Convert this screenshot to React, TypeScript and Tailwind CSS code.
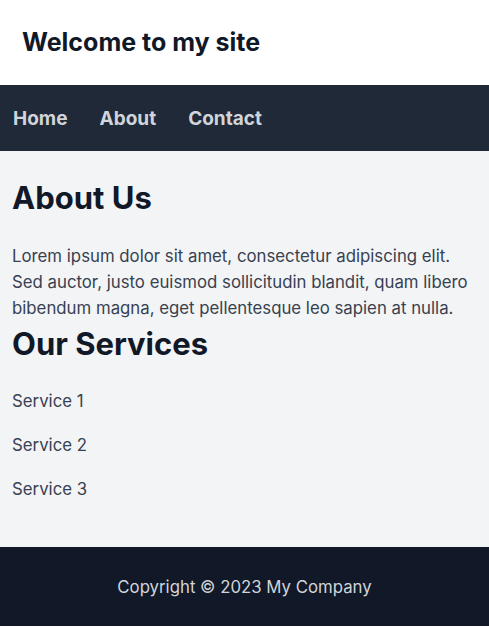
const App = () => {
  const links = ['Home', 'About', 'Contact'];
  const services = ['Service 1', 'Service 2', 'Service 3'];

  return (
    <div className="font-['Inter',sans-serif]">
      <header className="h-[85px] flex items-center px-[22px] bg-white">
        <h1 className="text-[25px] font-bold text-[#111827]">Welcome to my site</h1>
      </header>

      <nav className="h-[66px] flex items-center gap-8 px-[13px] pt-[2px] bg-[#1f2937]">
        {links.map((link) => (
          <a key={link} href="#" className="text-[19px] font-bold text-[#d1d5db]">
            {link}
          </a>
        ))}
      </nav>

      <main className="bg-[#f3f4f6] px-3 pt-[29px] pb-[46px]">
        <h2 className="text-[31px] leading-9 font-bold text-[#111827]">About Us</h2>
        <p className="mt-[27px] text-[16.8px] leading-[26px] text-[#374151]">
          Lorem ipsum dolor sit amet, consectetur adipiscing elit. Sed auctor, justo euismod sollicitudin blandit, quam libero bibendum magna, eget pellentesque leo sapien at nulla.
        </p>
        <h2 className="mt-[5px] text-[31px] leading-9 font-bold text-[#111827]">Our Services</h2>
        <ul className="mt-[27px] flex flex-col gap-5">
          {services.map((service) => (
            <li key={service} className="text-[16.8px] leading-6 text-[#374151]">
              {service}
            </li>
          ))}
        </ul>
      </main>

      <footer className="h-[79px] flex items-center justify-center pt-[2px] bg-[#111827]">
        <p className="text-[16.8px] text-[#d1d5db]">Copyright © 2023 My Company</p>
      </footer>
    </div>
  );
};

export default App;
